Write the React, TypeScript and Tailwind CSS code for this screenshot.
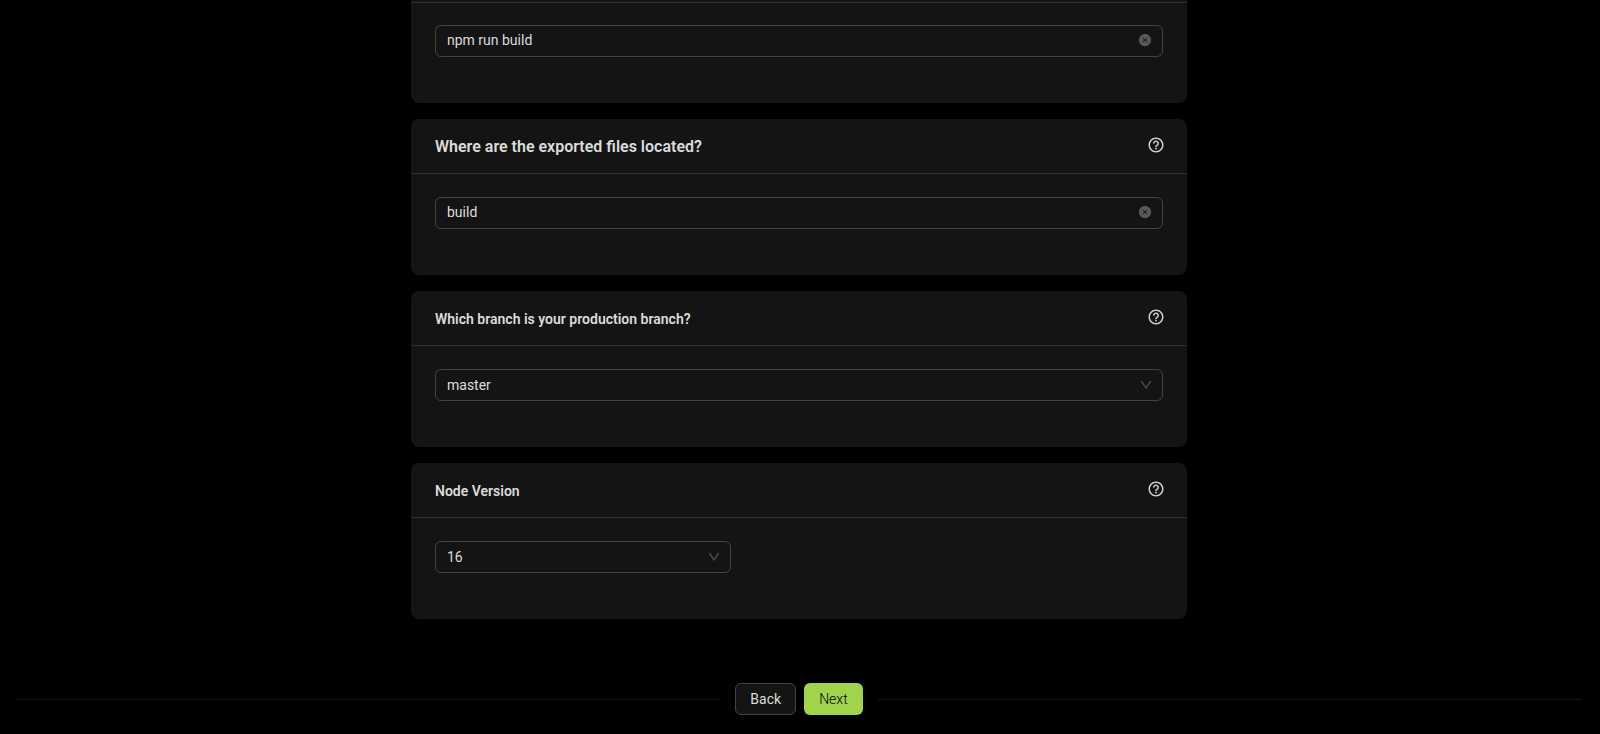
import { useState, type ReactNode } from 'react';
import { AiFillCloseCircle } from 'react-icons/ai';
import { MdHelpOutline } from 'react-icons/md';

interface CardProps {
  id: string;
  title?: string;
  large?: boolean;
  children: ReactNode;
}

function Card({ id, title, large, children }: CardProps) {
  return (
    <section
      className={`w-full bg-[#141414] ${title ? 'rounded-lg' : 'rounded-b-lg'}`}
    >
      {title ? (
        <div className="flex h-[55px] items-center justify-between border-b border-[#303030] pr-[22px] pl-6">
          <label
            htmlFor={id}
            className={`pt-0.5 font-semibold text-[#dcdcdc] ${large ? 'text-base' : 'text-sm'}`}
          >
            {title}
          </label>
          <button type="button" aria-label="Help" className="pb-0.5 text-[#d0d0d0]">
            <MdHelpOutline className="size-[18px]" />
          </button>
        </div>
      ) : (
        <div className="h-[3px] border-b border-[#303030]" />
      )}
      <div className={`px-6 pb-[46px] ${title ? 'pt-[23px]' : 'pt-[22px]'}`}>{children}</div>
    </section>
  );
}

interface FieldProps {
  id: string;
  initial: string;
  label?: string;
}

function TextField({ id, initial, label }: FieldProps) {
  const [value, setValue] = useState(initial);

  return (
    <div className="flex h-8 items-center rounded-md border border-[#424242] pr-[10px] pb-0.5 pl-[11px]">
      <input
        id={id}
        type="text"
        aria-label={label}
        value={value}
        onChange={(e) => setValue(e.target.value)}
        className="min-w-0 flex-1 bg-transparent text-sm text-[#dcdcdc] outline-none"
      />
      <button type="button" aria-label="Clear" onClick={() => setValue('')}>
        <AiFillCloseCircle className="size-[14px] text-[#585858]" />
      </button>
    </div>
  );
}

interface SelectFieldProps {
  id: string;
  options: string[];
}

function SelectField({ id, options }: SelectFieldProps) {
  return (
    <div className="relative">
      <select
        id={id}
        className="h-8 w-full appearance-none rounded-md border border-[#424242] bg-[#141414] px-[11px] text-sm text-[#dcdcdc] outline-none"
      >
        {options.map((option) => (
          <option key={option}>{option}</option>
        ))}
      </select>
      <svg
        viewBox="0 0 12 12"
        fill="none"
        stroke="currentColor"
        strokeWidth="1.2"
        className="pointer-events-none absolute top-[10px] right-[11px] size-3 text-[#585858]"
      >
        <path d="M1.4 2.2 6 9l4.6-6.8" />
      </svg>
    </div>
  );
}

export default function App() {
  return (
    <div className="min-h-screen bg-black pr-[18px] pb-[19px] pl-4 font-['Roboto','Liberation_Sans',sans-serif]">
      <main className="mx-auto flex max-w-[776px] flex-col gap-4">
        <Card id="build-command">
          <TextField id="build-command" initial="npm run build" label="Build command" />
        </Card>
        <Card id="export-dir" title="Where are the exported files located?" large>
          <TextField id="export-dir" initial="build" />
        </Card>
        <Card id="branch" title="Which branch is your production branch?">
          <SelectField id="branch" options={['master']} />
        </Card>
        <Card id="node-version" title="Node Version">
          <div className="max-w-[296px]">
            <SelectField id="node-version" options={['16']} />
          </div>
        </Card>
      </main>

      <footer className="mt-16 flex items-center gap-[15px]">
        <div className="h-px flex-1 bg-[#161616]" />
        <div className="flex gap-2">
          <button
            type="button"
            className="h-8 rounded-md border border-[#424242] bg-[#141414] px-[14px] text-sm text-[#dcdcdc]"
          >
            Back
          </button>
          <button type="button" className="h-8 rounded-md bg-[#a0d44a] px-[15px] text-sm font-light text-black">
            Next
          </button>
        </div>
        <div className="h-px flex-1 bg-[#161616]" />
      </footer>
    </div>
  );
}
